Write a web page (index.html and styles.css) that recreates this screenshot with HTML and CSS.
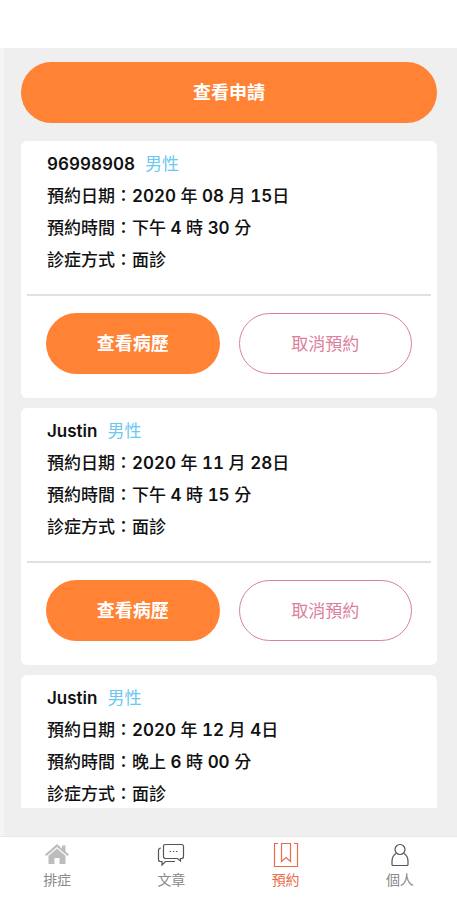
FILE: index.html
```html
<!DOCTYPE html>
<html lang="zh-Hant">
<head>
  <meta charset="UTF-8">
  <meta name="viewport" content="width=device-width, initial-scale=1.0">
  <title>預約</title>
  <link rel="stylesheet" href="styles.css">
</head>
<body>
  <header class="top-bar"></header>

  <main class="content">
    <button type="button" class="btn btn-primary">查看申請</button>

    <div class="list">
      <article class="card">
        <div class="info">
          <p><b>96998908</b><span class="gender">男性</span></p>
          <p>預約日期：<b>2020</b> 年 <b>08</b> 月 <b>15</b>日</p>
          <p>預約時間：下午 <b>4</b> 時 <b>30</b> 分</p>
          <p>診症方式：面診</p>
        </div>
        <div class="actions">
          <button type="button" class="btn btn-primary">查看病歷</button>
          <button type="button" class="btn btn-outline">取消預約</button>
        </div>
      </article>

      <article class="card">
        <div class="info">
          <p><b>Justin</b><span class="gender">男性</span></p>
          <p>預約日期：<b>2020</b> 年 <b>11</b> 月 <b>28</b>日</p>
          <p>預約時間：下午 <b>4</b> 時 <b>15</b> 分</p>
          <p>診症方式：面診</p>
        </div>
        <div class="actions">
          <button type="button" class="btn btn-primary">查看病歷</button>
          <button type="button" class="btn btn-outline">取消預約</button>
        </div>
      </article>

      <article class="card">
        <div class="info">
          <p><b>Justin</b><span class="gender">男性</span></p>
          <p>預約日期：<b>2020</b> 年 <b>12</b> 月 <b>4</b>日</p>
          <p>預約時間：晚上 <b>6</b> 時 <b>00</b> 分</p>
          <p>診症方式：面診</p>
        </div>
      </article>
    </div>
  </main>

  <nav class="tab-bar">
    <a href="#" class="tab">
      <svg class="icon-home" width="26" height="24" viewBox="0 0 26 24" aria-hidden="true">
        <path d="M13 1 L1 11.5 L2.5 13 L13 4 L23.5 13 L25 11.500 L21.500 8.500 V2.500 H18 V5.400 Z"/>
        <path d="M13 5.500 L4.500 12.800 V21 H10.500 V15 H15.500 V21 H21.500 V12.800 Z"/>
      </svg>
      <span>排症</span>
    </a>
    <a href="#" class="tab">
      <svg class="icon-line" width="28" height="24" viewBox="0 0 28 24" aria-hidden="true">
        <path d="M8.500 1.500 H24.500 Q26.500 1.500 26.500 3.500 V13.500 Q26.500 15.500 24.500 15.500 H23.500 V18 L20.500 15.500 H8.500 Q6.500 15.500 6.500 13.500 V3.500 Q6.500 1.500 8.500 1.500 Z"/>
        <path d="M4 5 Q1.500 5 1.500 7.500 V16.500 Q1.500 18.500 3.500 18.500 H5 V22 L8.500 18.500 H18"/>
        <path d="M12.500 8.500 H14 M15.800 8.500 H17.300 M19 8.500 H20.500"/>
      </svg>
      <span>文章</span>
    </a>
    <a href="#" class="tab active">
      <svg class="icon-line" width="26" height="26" viewBox="0 0 26 26" aria-hidden="true">
        <path d="M5 1.500 H1.500 V24.500 H24.500 V1.500 H21"/>
        <path d="M8.500 1.500 H17.500 V19.500 L13 15.500 L8.500 19.500 Z"/>
      </svg>
      <span>預約</span>
    </a>
    <a href="#" class="tab">
      <svg class="icon-line" width="20" height="26" viewBox="0 0 20 26" aria-hidden="true">
        <circle cx="10" cy="7.500" r="5"/>
        <path d="M6 11.500 Q2 14 2 19.500 V22.500 Q2 23.500 3 23.500 H17 Q18 23.500 18 22.500 V19.500 Q18 14 14 11.500"/>
      </svg>
      <span>個人</span>
    </a>
  </nav>
</body>
</html>
```
FILE: styles.css
```css
* {
  box-sizing: border-box;
}

body {
  margin: 0;
  height: 100vh;
  display: flex;
  flex-direction: column;
  font-family: Inter, "Noto Sans CJK TC", sans-serif;
  font-size: 17px;
  font-weight: 500;
  color: #111;
  background: #fff;
}

.top-bar {
  flex: none;
  height: 48px;
}

.content {
  flex: 1;
  min-height: 0;
  display: flex;
  flex-direction: column;
  gap: 18px;
  padding: 14px 20px 28px 17px;
  background: #efefef;
  border-left: 4px solid #f5f5f5;
}

.list {
  flex: 1;
  min-height: 0;
  display: flex;
  flex-direction: column;
  gap: 10px;
  overflow: hidden;
}

/* buttons */
.btn {
  flex: none;
  height: 61px;
  padding: 0 0 3px;
  border: none;
  border-radius: 31px;
  font-family: inherit;
  font-size: 18px;
  cursor: pointer;
}

.btn-primary {
  background: #ff8235;
  color: #fff;
  font-weight: 700;
}

.btn-outline {
  background: #fff;
  border: 1px solid #dc7f9c;
  color: #dc7f9c;
  font-size: 17px;
  font-weight: 400;
}

/* appointment card */
.card {
  flex: none;
  padding: 7px 6px 6px;
  background: #fff;
  border-radius: 6px;
}

.info {
  padding: 0 20px 18px;
}

.info p {
  margin: 0;
  line-height: 32px;
}

.info b {
  font-weight: 600;
  font-variant-numeric: tabular-nums;
}

.gender {
  margin-left: 10px;
  color: #6cc8f0;
  font-weight: 400;
}

.actions {
  display: grid;
  grid-template-columns: 1fr 1fr;
  gap: 19px;
  padding: 17px 19px 18px;
  border-top: 2px solid #e0e0e0;
}

/* bottom tabs */
.tab-bar {
  flex: none;
  height: 64px;
  display: flex;
  border-top: 1px solid #e8e8e8;
}

.tab {
  flex: 1;
  display: flex;
  flex-direction: column;
  align-items: center;
  padding-top: 5px;
  font-size: 14px;
  line-height: 20px;
  font-weight: 400;
  color: #888;
  text-decoration: none;
}

.tab svg {
  height: 26px;
  margin-bottom: 2px;
}

.tab.active {
  color: #ec6a4c;
}

.icon-home {
  fill: #bdbdbd;
}

.icon-line {
  fill: none;
  stroke: #555;
  stroke-width: 1.2;
}

.active .icon-line {
  stroke: #ec6a4c;
}
```
